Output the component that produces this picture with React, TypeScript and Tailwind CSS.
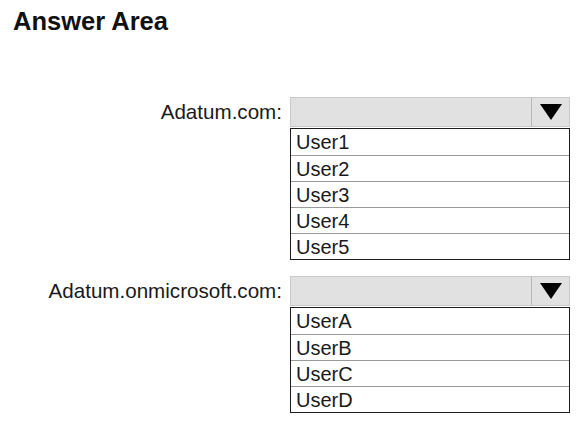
import React from "react";

function Dropdown({ label, items }: { label: string; items: string[] }) {
  return (
    <div className="flex items-start">
      <div className="w-[283px] h-[30px] flex items-center justify-end pr-[1px] text-[20.6px] text-[#1a1a1a]">
        {label}
      </div>
      <div className="ml-[7px] w-[280px]">
        <div className="h-[30px] flex border border-[#c9c9c9] bg-[#e1e1e1]">
          <div className="flex-1" />
          <div className="w-[38px] border-l border-[#b8b8b8] flex items-center justify-center">
            <svg width="22" height="16" viewBox="0 0 22 16">
              <polygon points="0,0 22,0 11,16" fill="#000" />
            </svg>
          </div>
        </div>
        <div className="mt-[1px] border-[1.5px] border-[#1c1c1c] bg-white">
          {items.map((it, i) => (
            <div
              key={it}
              className={
                "h-[26px] flex items-center pl-[5px] text-[20px] leading-none text-[#1a1a1a] " +
                (i > 0 ? "border-t border-[#9a9a9a]" : "")
              }
            >
              {it}
            </div>
          ))}
        </div>
      </div>
    </div>
  );
}

export default function App() {
  return (
    <div
      className="w-[583px] h-[425px] bg-white relative"
      style={{ fontFamily: '"Liberation Sans", Arial, sans-serif' }}
    >
      <div className="pl-[13px] pt-[6px] text-[25.5px] font-bold leading-[30px] text-[#111]">
        Answer Area
      </div>
      <div className="mt-[61px]">
        <Dropdown label="Adatum.com:" items={["User1", "User2", "User3", "User4", "User5"]} />
      </div>
      <div className="mt-[16px]">
        <Dropdown label="Adatum.onmicrosoft.com:" items={["UserA", "UserB", "UserC", "UserD"]} />
      </div>
    </div>
  );
}
